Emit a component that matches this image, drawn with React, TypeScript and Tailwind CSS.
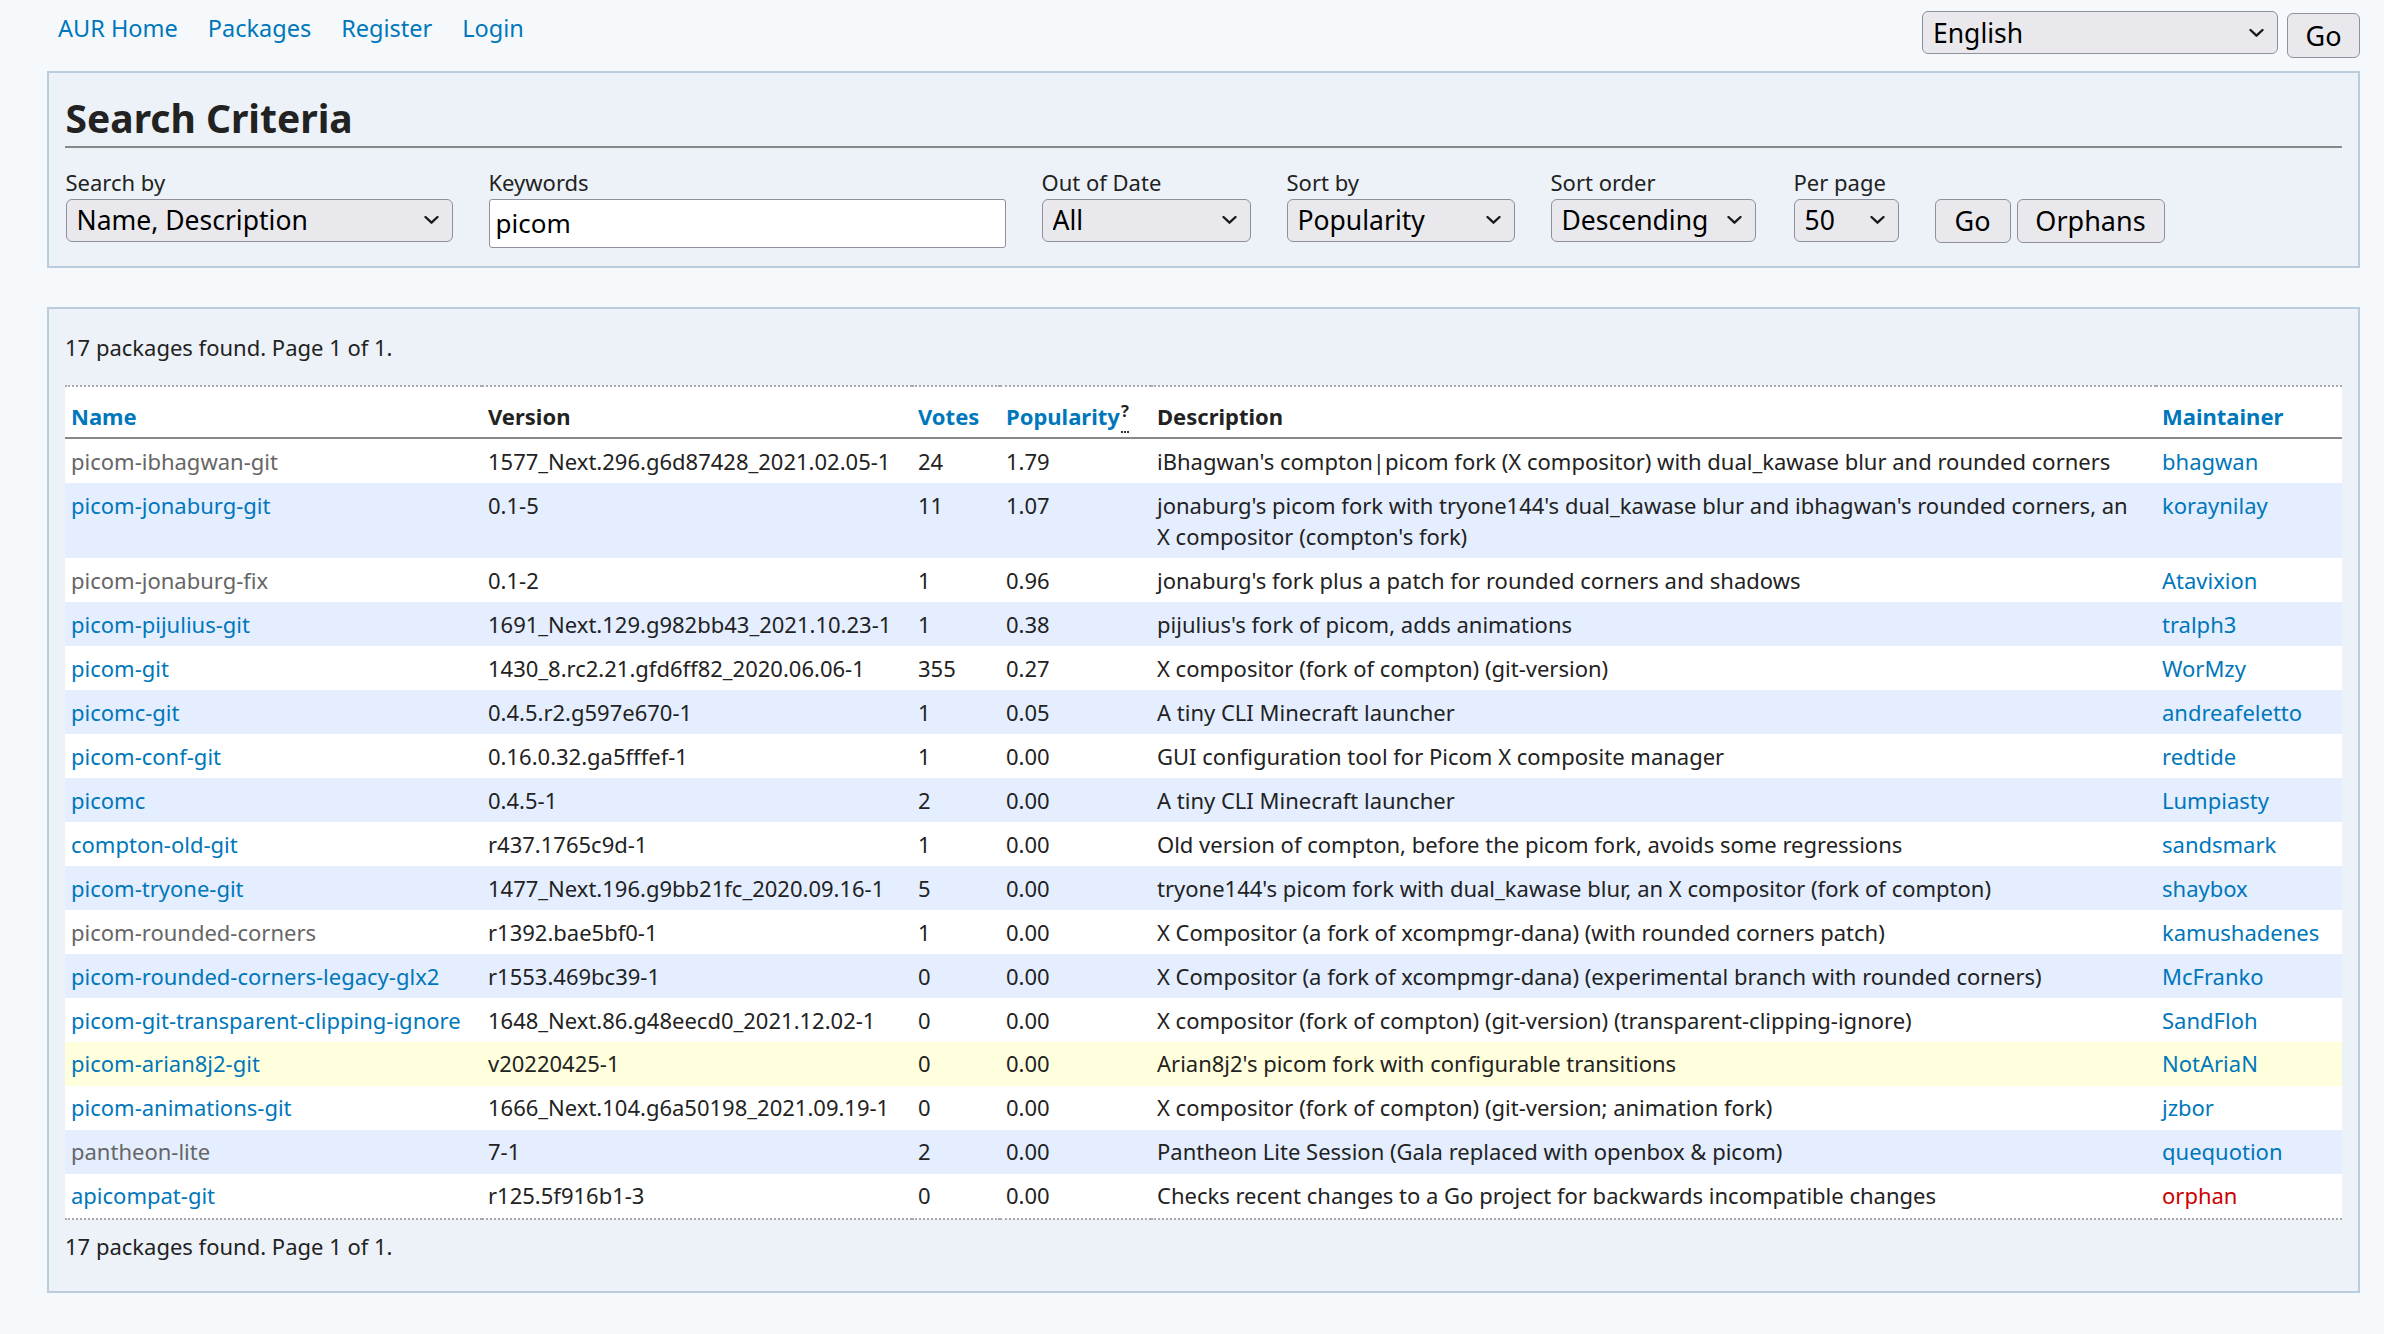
import React from 'react';

type Pkg = {
  name: string;
  version: string;
  votes: string;
  pop: string;
  desc: string;
  maintainer: string;
  visited?: boolean;
};

const packages: Pkg[] = [
  { name: 'picom-ibhagwan-git', version: '1577_Next.296.g6d87428_2021.02.05-1', votes: '24', pop: '1.79', desc: "iBhagwan's compton|picom fork (X compositor) with dual_kawase blur and rounded corners", maintainer: 'bhagwan', visited: true },
  { name: 'picom-jonaburg-git', version: '0.1-5', votes: '11', pop: '1.07', desc: "jonaburg's picom fork with tryone144's dual_kawase blur and ibhagwan's rounded corners, an X compositor (compton's fork)", maintainer: 'koraynilay' },
  { name: 'picom-jonaburg-fix', version: '0.1-2', votes: '1', pop: '0.96', desc: "jonaburg's fork plus a patch for rounded corners and shadows", maintainer: 'Atavixion', visited: true },
  { name: 'picom-pijulius-git', version: '1691_Next.129.g982bb43_2021.10.23-1', votes: '1', pop: '0.38', desc: "pijulius's fork of picom, adds animations", maintainer: 'tralph3' },
  { name: 'picom-git', version: '1430_8.rc2.21.gfd6ff82_2020.06.06-1', votes: '355', pop: '0.27', desc: 'X compositor (fork of compton) (git-version)', maintainer: 'WorMzy' },
  { name: 'picomc-git', version: '0.4.5.r2.g597e670-1', votes: '1', pop: '0.05', desc: 'A tiny CLI Minecraft launcher', maintainer: 'andreafeletto' },
  { name: 'picom-conf-git', version: '0.16.0.32.ga5fffef-1', votes: '1', pop: '0.00', desc: 'GUI configuration tool for Picom X composite manager', maintainer: 'redtide' },
  { name: 'picomc', version: '0.4.5-1', votes: '2', pop: '0.00', desc: 'A tiny CLI Minecraft launcher', maintainer: 'Lumpiasty' },
  { name: 'compton-old-git', version: 'r437.1765c9d-1', votes: '1', pop: '0.00', desc: 'Old version of compton, before the picom fork, avoids some regressions', maintainer: 'sandsmark' },
  { name: 'picom-tryone-git', version: '1477_Next.196.g9bb21fc_2020.09.16-1', votes: '5', pop: '0.00', desc: "tryone144's picom fork with dual_kawase blur, an X compositor (fork of compton)", maintainer: 'shaybox' },
  { name: 'picom-rounded-corners', version: 'r1392.bae5bf0-1', votes: '1', pop: '0.00', desc: 'X Compositor (a fork of xcompmgr-dana) (with rounded corners patch)', maintainer: 'kamushadenes', visited: true },
  { name: 'picom-rounded-corners-legacy-glx2', version: 'r1553.469bc39-1', votes: '0', pop: '0.00', desc: 'X Compositor (a fork of xcompmgr-dana) (experimental branch with rounded corners)', maintainer: 'McFranko' },
  { name: 'picom-git-transparent-clipping-ignore', version: '1648_Next.86.g48eecd0_2021.12.02-1', votes: '0', pop: '0.00', desc: 'X compositor (fork of compton) (git-version) (transparent-clipping-ignore)', maintainer: 'SandFloh' },
  { name: 'picom-arian8j2-git', version: 'v20220425-1', votes: '0', pop: '0.00', desc: "Arian8j2's picom fork with configurable transitions", maintainer: 'NotAriaN' },
  { name: 'picom-animations-git', version: '1666_Next.104.g6a50198_2021.09.19-1', votes: '0', pop: '0.00', desc: 'X compositor (fork of compton) (git-version; animation fork)', maintainer: 'jzbor' },
  { name: 'pantheon-lite', version: '7-1', votes: '2', pop: '0.00', desc: 'Pantheon Lite Session (Gala replaced with openbox & picom)', maintainer: 'quequotion', visited: true },
  { name: 'apicompat-git', version: 'r125.5f916b1-3', votes: '0', pop: '0.00', desc: 'Checks recent changes to a Go project for backwards incompatible changes', maintainer: 'orphan' },
];

const Chevron = () => (
  <svg width="15" height="9" viewBox="0 0 15 9" className="pointer-events-none absolute right-[14px] top-1/2 -translate-y-1/2">
    <path d="M1.5 1.5 L7.5 7.2 L13.5 1.5" fill="none" stroke="#1b1b1b" strokeWidth="2.4" strokeLinecap="round" strokeLinejoin="round" />
  </svg>
);

const Select: React.FC<{ value: string; width: string }> = ({ value, width }) => (
  <div className={`relative ${width}`}>
    <select
      defaultValue={value}
      className="h-[43px] w-full appearance-none rounded-[6px] border-[1.5px] border-[#8f8f9d] bg-[#e9e9ed] py-0 pl-[10px] pr-[34px] text-[26.5px] leading-[36px] text-black outline-none"
    >
      <option>{value}</option>
    </select>
    <Chevron />
  </div>
);

const Field: React.FC<{ label: string; children: React.ReactNode; className?: string }> = ({ label, children, className = '' }) => (
  <div className={`flex flex-col ${className}`}>
    <label className="h-[32px] leading-[31px] text-[#222]">{label}</label>
    {children}
  </div>
);

const Button: React.FC<{ children: React.ReactNode; width: string }> = ({ children, width }) => (
  <button className={`${width} h-[44px] rounded-[6px] border-[1.5px] border-[#8f8f9d] bg-[#e9e9ed] text-[27px] leading-none text-black`}>
    {children}
  </button>
);

export default function App() {
  return (
    <div className="min-h-screen bg-[#f6f9fc] pb-[40px] text-[22px] leading-[1.4] text-[#222]" style={{ fontFamily: '"Noto Sans", "Open Sans", sans-serif' }}>
      <div className="flex h-[71px] items-start justify-between pr-[24px] pt-[11px]">
        <nav className="flex gap-[30px] pl-[58px] pt-[2px] text-[23.5px] leading-[31px] text-[#07b]">
          <a href="#">AUR Home</a>
          <a href="#">Packages</a>
          <a href="#">Register</a>
          <a href="#">Login</a>
        </nav>
        <div className="flex items-start gap-[9px]">
          <Select value="English" width="w-[356px]" />
          <button className="mt-[2px] h-[45px] w-[73px] rounded-[6px] border-[1.5px] border-[#8f8f9d] bg-[#e9e9ed] text-[27px] leading-none text-black">Go</button>
        </div>
      </div>

      <div className="ml-[47px] mr-[24px] border-2 border-[#bcd] bg-[#ecf2f7] pb-[18px] pl-[16.5px] pr-[16px] pt-[21px]">
        <h2 className="-ml-[0.5px] border-b-2 border-[#888] pb-[4px] pl-[0.5px] text-[39px] font-bold leading-[48px] text-[#222]">Search Criteria</h2>
        <div className="mt-[18.5px] flex items-start gap-[36px]">
          <Field label="Search by">
            <Select value="Name, Description" width="w-[387px]" />
          </Field>
          <Field label="Keywords">
            <input
              defaultValue="picom"
              className="h-[49px] w-[517px] rounded-[3px] border-[1.5px] border-[#8f8f9d] bg-white px-[6px] text-[26px] text-black outline-none"
            />
          </Field>
          <Field label="Out of Date">
            <Select value="All" width="w-[209px]" />
          </Field>
          <Field label="Sort by">
            <Select value="Popularity" width="w-[228px]" />
          </Field>
          <Field label="Sort order">
            <Select value="Descending" width="w-[205px]" />
          </Field>
          <Field label="Per page" className="ml-[2px]">
            <Select value="50" width="w-[105px]" />
          </Field>
          <div className="flex gap-[6px] pt-[32px]">
            <Button width="w-[76px]">Go</Button>
            <Button width="w-[148px]">Orphans</Button>
          </div>
        </div>
      </div>

      <div className="ml-[47px] mr-[24px] mt-[39px] border-2 border-[#bcd] bg-[#ecf2f7] px-[16px] pb-[29px] pt-[23px]">
        <p className="leading-[31px]">17 packages found. Page 1 of 1.</p>
        <table className="mt-[22px] w-full table-fixed border-collapse border-y-2 border-dotted border-y-[#aaa]">
          <colgroup>
            <col className="w-[417px]" />
            <col className="w-[430px]" />
            <col className="w-[88px]" />
            <col className="w-[151px]" />
            <col />
            <col className="w-[186px]" />
          </colgroup>
          <thead>
            <tr className="border-b-2 border-[#888] bg-white">
              <th className="pb-[5.5px] pl-[6px] pt-[14.5px] text-left font-bold text-[#07b]"><a href="#">Name</a></th>
              <th className="pb-[5.5px] pl-[6px] pt-[14.5px] text-left font-bold">Version</th>
              <th className="pb-[5.5px] pl-[6px] pt-[14.5px] text-left font-bold text-[#07b]"><a href="#">Votes</a></th>
              <th className="pb-[5.5px] pl-[6px] pt-[14.5px] text-left font-bold text-[#07b]">
                <a href="#">Popularity</a>
                <abbr title="Popularity is calculated as the sum of all votes with each vote being weighted with a factor of 0.98 per day since its creation." className="ml-[1px] border-b-2 border-dotted border-[#333] no-underline">
                  <sup className="font-bold text-[#222]">?</sup>
                </abbr>
              </th>
              <th className="pb-[5.5px] pl-[6px] pt-[14.5px] text-left font-bold">Description</th>
              <th className="pb-[5.5px] pl-[6px] pt-[14.5px] text-left font-bold text-[#07b]"><a href="#">Maintainer</a></th>
            </tr>
          </thead>
          <tbody>
            {packages.map((p, i) => {
              const bg = p.name === 'picom-arian8j2-git' ? 'bg-[#ffd]' : i % 2 === 0 ? 'bg-white' : 'bg-[#e4eeff]';
              return (
                <tr key={p.name} className={`${bg} align-top`}>
                  <td className="py-[6.6px] pl-[6px]">
                    <a href="#" className={p.visited ? 'text-[#666]' : 'text-[#07b]'}>{p.name}</a>
                  </td>
                  <td className="py-[6.6px] pl-[6px]">{p.version}</td>
                  <td className="py-[6.6px] pl-[6px]">{p.votes}</td>
                  <td className="py-[6.6px] pl-[6px]">{p.pop}</td>
                  <td className="py-[6.6px] pl-[6px] pr-[20px]">{p.desc}</td>
                  <td className="py-[6.6px] pl-[6px]">
                    {p.maintainer === 'orphan' ? (
                      <span className="text-[#c00]">orphan</span>
                    ) : (
                      <a href="#" className="text-[#07b]">{p.maintainer}</a>
                    )}
                  </td>
                </tr>
              );
            })}
          </tbody>
        </table>
        <p className="mt-[11px] leading-[31px]">17 packages found. Page 1 of 1.</p>
      </div>
    </div>
  );
}
